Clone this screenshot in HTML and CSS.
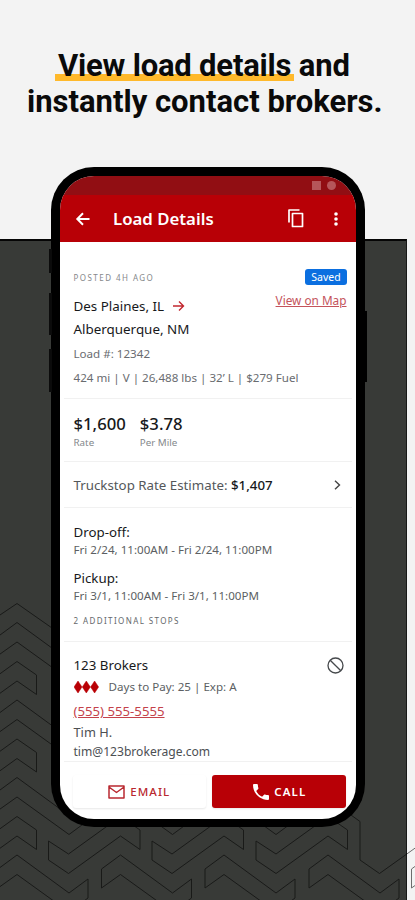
FILE: index.html
```html
<!DOCTYPE html>
<html lang="en">
<head>
<meta charset="utf-8">
<title>Load Details</title>
<link rel="stylesheet" href="styles.css">
</head>
<body>
<main class="promo">
  <div class="backdrop"></div>
  <svg class="pattern" width="415" height="900" viewBox="0 0 415 900" aria-hidden="true">
    <defs>
      <path id="u" d="M48.500 841V860L68.500 873.500L120.500 836L140 849.500V830L120.500 816.500L68.500 854Z"/>
      <path id="v" d="M101.500 869V888L120.500 874.500L172.500 912L191.500 898V879L172.500 893L120.500 855Z"/>
      <g id="uv"><use href="#u"/><use href="#v"/></g>
    </defs>
    <g class="lines">
      <path d="M-3 617L17 603.500L52 628M344 810L360 821.500V860L379.500 873.500L418 846"/>
      <use href="#v" x="-103.500" y="-232.500"/>
      <use href="#uv" x="-103.500" y="-155"/>
      <use href="#uv" x="-103.500" y="-77.500"/>
      <use href="#v" y="-77.500"/>
      <use href="#v" x="103.500" y="-77.500"/>
      <use href="#uv" x="-103.500"/>
      <use href="#uv"/>
      <use href="#uv" x="103.500"/>
      <use href="#uv" x="207.500"/>
      <use href="#v" x="310"/>
    </g>
  </svg>
  <h1 class="headline"><span class="line first"><span class="marked">View load details</span> and</span><span class="line second">instantly contact brokers.</span></h1>
  <section class="phone">
    <i class="key k1"></i><i class="key k2"></i><i class="key k3"></i><i class="key k4"></i>
    <div class="screen">
      <div class="status"><i class="square"></i><i class="dot"></i></div>
      <header class="bar">
        <svg width="16" height="16" viewBox="0 0 16 16"><path d="M14.500 8H2.500M8 2.300L2.300 8L8 13.700" fill="none" stroke="#fff" stroke-width="2"/></svg>
        <h2>Load Details</h2>
        <svg class="copy" width="16" height="19" viewBox="0 0 16 19"><path d="M1 13.500V1H11.500M4.500 4.500H14.500V17.500H4.500Z" fill="none" stroke="#fff" stroke-width="1.700" stroke-linejoin="round"/></svg>
        <svg width="4" height="14" viewBox="0 0 4 14"><g fill="#fff"><circle cx="2" cy="2" r="1.800"/><circle cx="2" cy="7" r="1.800"/><circle cx="2" cy="12" r="1.800"/></g></svg>
      </header>
      <div class="content">
        <section class="route">
          <div class="row posted"><span class="caps">POSTED 4H AGO</span><span class="badge">Saved</span></div>
          <div class="row from"><span class="city">Des Plaines, IL</span><svg width="12" height="12" viewBox="0 0 12 12"><path d="M0 6H10.500M6 1.500L10.500 6L6 10.500" fill="none" stroke="#c2272f" stroke-width="1.400"/></svg><a class="map">View on Map</a></div>
          <div class="row to"><span class="city">Alberquerque, NM</span></div>
          <div class="row num"><span class="meta">Load #: 12342</span></div>
          <div class="row spec"><span class="meta">424 mi | V | 26,488 lbs | 32’ L | $279 Fuel</span></div>
        </section>
        <section class="rates">
          <div class="rate"><b>$1,600</b><span>Rate</span></div>
          <div class="rate"><b>$3.78</b><span>Per Mile</span></div>
        </section>
        <section class="estimate"><span>Truckstop Rate Estimate: <b>$1,407</b></span><svg width="7" height="10" viewBox="0 0 7 10"><path d="M1 .7L5.500 5L1 9.300" fill="none" stroke="#444" stroke-width="1.400"/></svg></section>
        <section class="stops">
          <h3>Drop-off:</h3>
          <p>Fri 2/24, 11:00AM - Fri 2/24, 11:00PM</p>
          <h3 class="pick">Pickup:</h3>
          <p>Fri 3/1, 11:00AM - Fri 3/1, 11:00PM</p>
          <div class="caps">2 ADDITIONAL STOPS</div>
        </section>
        <section class="broker">
          <div class="row name"><h3>123 Brokers</h3><svg width="17" height="17" viewBox="0 0 17 17"><g fill="none" stroke="#46494c" stroke-width="1.300"><circle cx="8.500" cy="8.500" r="7.500"/><path d="M3.200 3.200L13.800 13.800"/></g></svg></div>
          <div class="row days"><svg width="25" height="12" viewBox="0 0 25 12"><path d="M4 0L8 6L4 12L0 6ZM12.300 0L16.300 6L12.300 12L8.300 6ZM20.600 0L24.600 6L20.600 12L16.600 6Z" fill="#b90005" stroke="#b90005" stroke-width=".5"/></svg><span>Days to Pay: 25 | Exp: A</span></div>
          <a class="tel">(555) 555-5555</a>
          <p class="tim">Tim H.</p>
          <p class="mail">tim@123brokerage.com</p>
        </section>
      </div>
      <footer class="actions">
        <button class="btn email"><svg width="17" height="14" viewBox="0 0 17 14"><path d="M1 1H16V13H1ZM1 2L8.500 7.500L16 2" fill="none" stroke="#b92930" stroke-width="1.500" stroke-linejoin="round"/></svg><span>EMAIL</span></button>
        <button class="btn call"><svg width="16" height="16" viewBox="3 3 18 18"><path fill="#fff" d="M6.620 10.790c1.440 2.830 3.760 5.140 6.590 6.590l2.200-2.200c.27-.27.67-.36 1.020-.24 1.120.37 2.330.57 3.570.57.55 0 1 .45 1 1V20c0 .55-.45 1-1 1-9.390 0-17-7.610-17-17 0-.55.450-1 1-1h3.500c.55 0 1 .45 1 1 0 1.250.200 2.450.570 3.570.110.350.030.740-.250 1.020z"/></svg><span>CALL</span></button>
      </footer>
    </div>
  </section>
</main>
</body>
</html>
```
FILE: styles.css
```css
* { box-sizing: border-box; }
body { margin: 0; }
h1, h2, h3, p { margin: 0; font-weight: 400; }
svg { display: block; flex: none; }
.promo { position: relative; width: 415px; height: 900px; overflow: hidden; background: #f3f3f3; font-family: "Noto Sans", sans-serif; color: #17191b; }
.backdrop { position: absolute; left: 0; top: 239px; width: 407px; height: 661px; background: #383a37; border-top: 2px solid #050505; border-right: 1px solid #171817; }
.pattern { position: absolute; left: 0; top: 0; }
.lines { fill: none; stroke: #000; stroke-width: 1; opacity: .55; }
.headline { position: relative; height: 167px; padding-top: 48px; font-family: Roboto, sans-serif; font-weight: 700; font-size: 31px; line-height: 36px; color: #0a0a0a; white-space: nowrap; }
.line { display: block; width: max-content; }
.first { margin-left: 58px; letter-spacing: -.2px; }
.second { margin-left: 27px; }
.marked { background: linear-gradient(#ffb92b, #ffb92b) 0 calc(100% - 3px) / 100% 7px no-repeat; margin: 0 -3px; padding: 0 3px; }
.phone { position: relative; width: 314px; height: 660px; margin-left: 51px; padding: 9px 9px 8px; background: #000; border-radius: 43px; }
.key { position: absolute; background: #0b0b0b; width: 3px; }
.k1 { left: -2px; top: 82px; height: 24px; }
.k2 { left: -2px; top: 126px; height: 42px; }
.k3 { left: -2px; top: 182px; height: 43px; }
.k4 { right: -2px; top: 144px; height: 71px; background: #000; }
.screen { height: 643px; background: #fff; border-radius: 34px; overflow: hidden; display: flex; flex-direction: column; }
.status { height: 19px; background: #910e13; display: flex; justify-content: flex-end; align-items: center; gap: 6px; padding-right: 20px; }
.status i { width: 9px; height: 9px; background: #b5565a; }
.status .dot { border-radius: 50%; }
.bar { height: 47px; background: #b80006; display: flex; align-items: center; padding: 0 18px 0 15px; color: #fff; }
.bar h2 { flex: 1; margin-left: 22px; font-size: 16.800px; font-weight: 600; white-space: nowrap; }
.copy { margin-right: 30px; }
.content { height: 520px; white-space: nowrap; }
.content section { margin: 0 4px; padding: 0 10px 0 9.500px; border-bottom: 1px solid #f1f1f1; }
.row { display: flex; align-items: center; }
.content .route { height: 157px; padding-top: 25px; }
.posted { height: 20px; justify-content: space-between; }
.caps { font-size: 8px; letter-spacing: 1.450px; color: #85888b; }
.badge { width: 42px; height: 16px; margin-right: -5px; border-radius: 3px; background: #0b6fe0; color: #fff; font-size: 10.500px; line-height: 16px; text-align: center; }
.from { height: 37px; }
.from svg { margin-left: 9px; }
.map { margin-left: auto; margin-right: -4.500px; margin-top: -12px; font-size: 11.800px; color: #c4535b; text-decoration: underline; }
.city { font-size: 13.400px; }
.to { height: 10px; }
.num { height: 39px; }
.spec { height: 8px; }
.meta { font-size: 11.600px; color: #696c70; }
.content .rates { display: flex; gap: 14px; height: 63px; padding-top: 14px; }
.rate { display: flex; flex-direction: column; }
.rate b { font-size: 16.700px; line-height: 22px; font-weight: 500; }
.rate span { font-size: 9.800px; line-height: 15px; color: #85888b; }
.content .estimate { height: 46px; display: flex; align-items: center; justify-content: space-between; padding-top: 1px; padding-right: 11px; font-size: 13.300px; color: #54575a; }
.estimate b { color: #17191b; font-weight: 500; }
.content .stops { height: 134px; padding-top: 15px; }
h3 { font-size: 13.300px; line-height: 18px; }
.stops p { font-size: 11.600px; line-height: 17px; color: #5c5f63; }
.stops .pick { margin-top: 11px; }
.stops .caps { margin-top: 9px; line-height: 16px; letter-spacing: 1.400px; color: #65686b; }
.content .broker { height: 120px; padding-top: 14px; }
.name { justify-content: space-between; height: 18px; }
.name svg { margin-right: -2px; }
.days { height: 25px; gap: 10px; font-size: 11.600px; color: #5c5f63; }
.tel { display: block; font-size: 13.200px; line-height: 24px; color: #c4424b; text-decoration: underline; }
.broker p { font-size: 12.100px; line-height: 20px; color: #4c4f53; }
.broker .tim { font-size: 12.800px; line-height: 19px; }
.actions { display: flex; gap: 6px; padding: 13px 10px 0 13px; }
.btn { flex: 1; height: 33px; display: flex; align-items: center; justify-content: center; gap: 5px; border: 0; border-radius: 3px; background: #fff; font: 600 11.500px "Noto Sans", sans-serif; letter-spacing: 1.100px; color: #b92930; box-shadow: 0 1px 2px #e8e8e8; }
.email span { font-weight: 500; }
.call { background: #b80006; color: #fff; padding-left: 8px; }
```
